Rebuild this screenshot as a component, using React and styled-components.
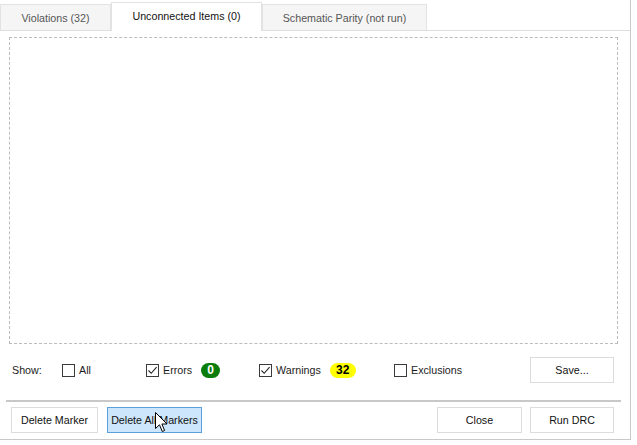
import React from 'react'
import styled, { createGlobalStyle } from 'styled-components'

const Global = createGlobalStyle`
    body {
        margin: 0;
        background: #ffffff;
        font-family: 'Liberation Sans', Arial, sans-serif;
        font-size: 10.7px;
        color: #1c1c1c;
    }
`

const Window = styled.div`
    width: 631px;
    height: 440px;
    box-sizing: border-box;
    border-right: 1px solid #c9c9c9;
    border-bottom: 1px solid #c9c9c9;
    display: flex;
    flex-direction: column;
`

const TabBar = styled.div`
    display: flex;
    align-items: flex-end;
    height: 31px;
    box-sizing: border-box;
    border-bottom: 1px solid #dedede;
`

const Tab = styled.div`
    width: ${p => p.w}px;
    height: ${p => (p.active ? 29 : 26)}px;
    margin-bottom: ${p => (p.active ? -1 : 0)}px;
    box-sizing: border-box;
    border: 1px solid #e2e2e2;
    border-bottom: none;
    background: ${p => (p.active ? '#ffffff' : '#f5f5f5')};
    color: ${p => (p.active ? '#111' : '#555')};
    display: flex;
    align-items: center;
    justify-content: center;
    padding-bottom: ${p => (p.active ? 3 : 0)}px;
`

const ListBox = styled.div`
    height: 307px;
    margin: 6px 12px 0 9px;
    box-sizing: border-box;
    border: 1px dashed #bcbcbc;
`

const ShowRow = styled.div`
    display: flex;
    align-items: center;
    height: 26px;
    margin-top: 13px;
    padding: 0 16px 0 12px;
`

const ShowLabel = styled.span`
    width: 50px;
`

const Group = styled.label`
    display: flex;
    align-items: center;
    width: ${p => p.w}px;
`

const Box = styled.span`
    width: 11px;
    height: 11px;
    border: 1px solid #3a3a3a;
    margin-right: 4px;
    display: flex;
    align-items: center;
    justify-content: center;
`

const Badge = styled.span`
    margin-left: 9px;
    min-width: ${p => p.w}px;
    height: 15px;
    border-radius: 8px;
    background: ${p => p.bg};
    color: ${p => p.fg};
    font-weight: bold;
    font-size: 12px;
    display: flex;
    align-items: center;
    justify-content: center;
`

const Spacer = styled.div`
    flex: 1;
`

const Button = styled.div`
    position: relative;
    width: ${p => p.w}px;
    height: 26px;
    margin-left: ${p => p.ml || 0}px;
    box-sizing: border-box;
    border: 1px solid ${p => (p.hover ? '#5c9fdb' : '#dcdcdc')};
    background: ${p => (p.hover ? '#cde6fb' : '#ffffff')};
    display: flex;
    align-items: center;
    justify-content: center;
    color: #111;
`

const Separator = styled.div`
    height: 2px;
    margin: 17px 9px 0 6px;
    background: #c8c8c8;
`

const ButtonRow = styled.div`
    display: flex;
    align-items: center;
    margin-top: 5px;
    padding: 0 16px 0 11px;
`

const Cursor = styled.svg`
    position: absolute;
    left: 47px;
    top: 4px;
`

const Check = () => (
    <svg width="11" height="11" viewBox="0 0 11 11">
        <path d="M1.5 5.5 L4.2 8.3 L9.6 2.2" fill="none" stroke="#222" strokeWidth="1.1" />
    </svg>
)

const Option = ({ w, checked, children, badge }) => (
    <Group w={w}>
        <Box>{checked && <Check />}</Box>
        {children}
        {badge}
    </Group>
)

const App = () => {
    return (
        <>
            <Global />
            <Window>
                <TabBar>
                    <Tab w={111}>Violations (32)</Tab>
                    <Tab w={151} active>Unconnected Items (0)</Tab>
                    <Tab w={165}>Schematic Parity (not run)</Tab>
                </TabBar>
                <ListBox />
                <ShowRow>
                    <ShowLabel>Show:</ShowLabel>
                    <Option w={84}>All</Option>
                    <Option w={113} checked badge={<Badge w={19} bg="#0b7d0b" fg="#ffffff">0</Badge>}>Errors</Option>
                    <Option w={135} checked badge={<Badge w={26} bg="#ffff00" fg="#000000">32</Badge>}>Warnings</Option>
                    <Option w={100}>Exclusions</Option>
                    <Spacer />
                    <Button w={84}>Save...</Button>
                </ShowRow>
                <Separator />
                <ButtonRow>
                    <Button w={87}>Delete Marker</Button>
                    <Button w={95} ml={9} hover>
                        Delete All Markers
                        <Cursor width="13" height="21" viewBox="0 0 13 21">
                            <path d="M0.5 0.5 L0.5 16.5 L4.5 12.8 L7.3 19.5 L9.6 18.5 L6.9 12 L12 12 Z" fill="#ffffff" stroke="#000000" strokeWidth="1" />
                        </Cursor>
                    </Button>
                    <Spacer />
                    <Button w={85}>Close</Button>
                    <Button w={84} ml={8}>Run DRC</Button>
                </ButtonRow>
            </Window>
        </>
    )
}

export default App
